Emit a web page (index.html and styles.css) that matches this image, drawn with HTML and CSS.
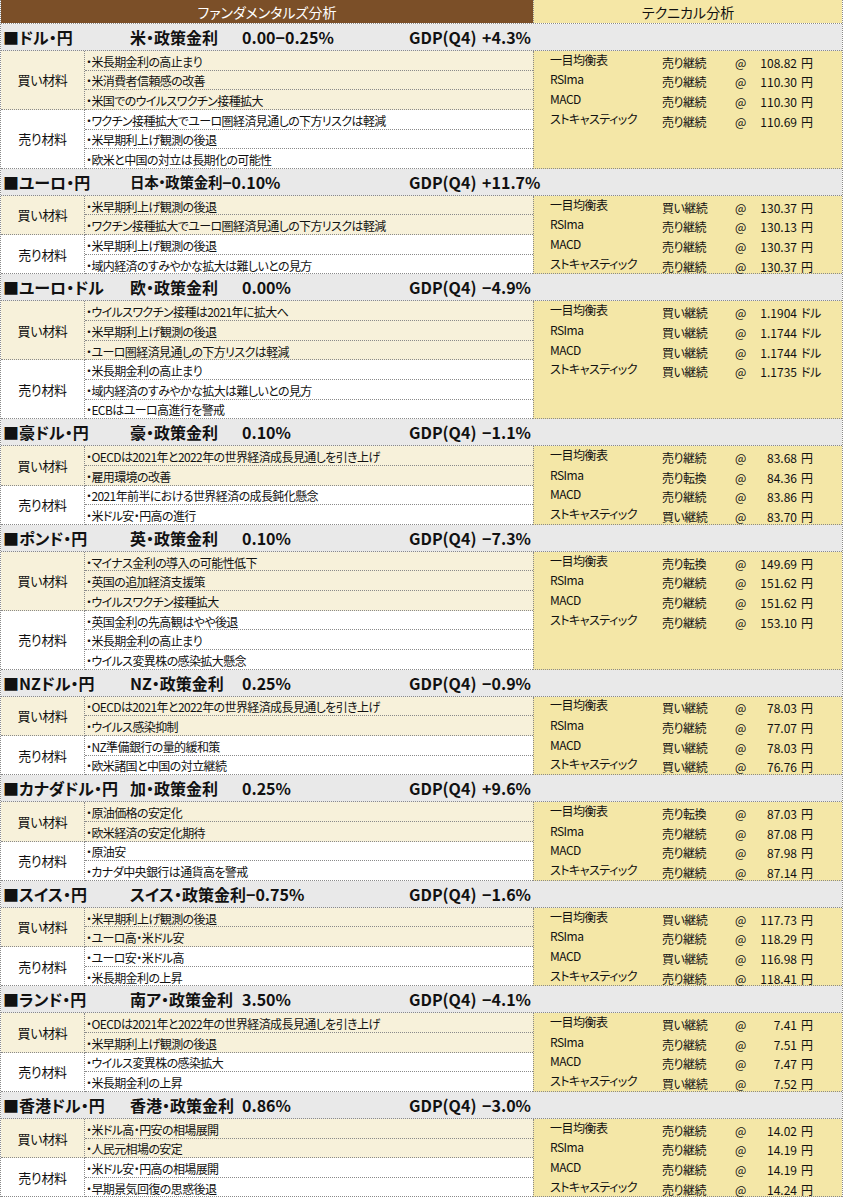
FILE: index.html
```html
<!DOCTYPE html>
<html lang="ja">
<head>
<meta charset="utf-8">
<title>ファンダメンタルズ分析・テクニカル分析</title>
<link rel="stylesheet" href="styles.css">
</head>
<body>
<div class="sheet">
  <div class="title-row">
    <div class="t-fund">ファンダメンタルズ分析</div>
    <div class="t-tech">テクニカル分析</div>
  </div>

  <section class="pair">
    <div class="ph"><span class="pn">■ドル・円</span><span class="pr"><span class="rl">米・政策金利</span><span class="rv">0.00−0.25%</span></span><span class="pg">GDP(Q4)&nbsp;+4.3%</span></div>
    <div class="pb">
      <div class="lab buy s3">買い材料</div>
      <div class="it buy">・米長期金利の高止まり</div>
      <div class="it buy">・米消費者信頼感の改善</div>
      <div class="it buy gl">・米国でのウイルスワクチン接種拡大</div>
      <div class="lab s3">売り材料</div>
      <div class="it">・ワクチン接種拡大でユーロ圏経済見通しの下方リスクは軽減</div>
      <div class="it">・米早期利上げ観測の後退</div>
      <div class="it">・欧米と中国の対立は長期化の可能性</div>
      <div class="tech s6">
        <span class="tn">一目均衡表</span><span class="ts">売り継続</span><span class="ta">@</span><span class="tv">108.82</span><span class="tu">円</span>
        <span class="tn">RSIma</span><span class="ts">売り継続</span><span class="ta">@</span><span class="tv">110.30</span><span class="tu">円</span>
        <span class="tn">MACD</span><span class="ts">売り継続</span><span class="ta">@</span><span class="tv">110.30</span><span class="tu">円</span>
        <span class="tn">ストキャスティック</span><span class="ts">売り継続</span><span class="ta">@</span><span class="tv">110.69</span><span class="tu">円</span>
      </div>
    </div>
  </section>

  <section class="pair">
    <div class="ph"><span class="pn">■ユーロ・円</span><span class="pr"><span class="rl tight">日本・政策金利</span><span class="rv">−0.10%</span></span><span class="pg">GDP(Q4)&nbsp;+11.7%</span></div>
    <div class="pb">
      <div class="lab buy s2">買い材料</div>
      <div class="it buy">・米早期利上げ観測の後退</div>
      <div class="it buy gl">・ワクチン接種拡大でユーロ圏経済見通しの下方リスクは軽減</div>
      <div class="lab s2">売り材料</div>
      <div class="it">・米早期利上げ観測の後退</div>
      <div class="it">・域内経済のすみやかな拡大は難しいとの見方</div>
      <div class="tech s4">
        <span class="tn">一目均衡表</span><span class="ts">買い継続</span><span class="ta">@</span><span class="tv">130.37</span><span class="tu">円</span>
        <span class="tn">RSIma</span><span class="ts">売り継続</span><span class="ta">@</span><span class="tv">130.13</span><span class="tu">円</span>
        <span class="tn">MACD</span><span class="ts">売り継続</span><span class="ta">@</span><span class="tv">130.37</span><span class="tu">円</span>
        <span class="tn">ストキャスティック</span><span class="ts">売り継続</span><span class="ta">@</span><span class="tv">130.37</span><span class="tu">円</span>
      </div>
    </div>
  </section>

  <section class="pair">
    <div class="ph"><span class="pn">■ユーロ・ドル</span><span class="pr"><span class="rl">欧・政策金利</span><span class="rv">0.00%</span></span><span class="pg">GDP(Q4)&nbsp;−4.9%</span></div>
    <div class="pb">
      <div class="lab buy s3">買い材料</div>
      <div class="it buy">・ウイルスワクチン接種は2021年に拡大へ</div>
      <div class="it buy">・米早期利上げ観測の後退</div>
      <div class="it buy gl">・ユーロ圏経済見通しの下方リスクは軽減</div>
      <div class="lab s3">売り材料</div>
      <div class="it">・米長期金利の高止まり</div>
      <div class="it">・域内経済のすみやかな拡大は難しいとの見方</div>
      <div class="it">・ECBはユーロ高進行を警戒</div>
      <div class="tech s6">
        <span class="tn">一目均衡表</span><span class="ts">買い継続</span><span class="ta">@</span><span class="tv">1.1904</span><span class="tu">ドル</span>
        <span class="tn">RSIma</span><span class="ts">買い継続</span><span class="ta">@</span><span class="tv">1.1744</span><span class="tu">ドル</span>
        <span class="tn">MACD</span><span class="ts">買い継続</span><span class="ta">@</span><span class="tv">1.1744</span><span class="tu">ドル</span>
        <span class="tn">ストキャスティック</span><span class="ts">買い継続</span><span class="ta">@</span><span class="tv">1.1735</span><span class="tu">ドル</span>
      </div>
    </div>
  </section>

  <section class="pair">
    <div class="ph"><span class="pn">■豪ドル・円</span><span class="pr"><span class="rl">豪・政策金利</span><span class="rv">0.10%</span></span><span class="pg">GDP(Q4)&nbsp;−1.1%</span></div>
    <div class="pb">
      <div class="lab buy s2">買い材料</div>
      <div class="it buy">・OECDは2021年と2022年の世界経済成長見通しを引き上げ</div>
      <div class="it buy gl">・雇用環境の改善</div>
      <div class="lab s2">売り材料</div>
      <div class="it">・2021年前半における世界経済の成長鈍化懸念</div>
      <div class="it">・米ドル安・円高の進行</div>
      <div class="tech s4">
        <span class="tn">一目均衡表</span><span class="ts">売り継続</span><span class="ta">@</span><span class="tv">83.68</span><span class="tu">円</span>
        <span class="tn">RSIma</span><span class="ts">売り転換</span><span class="ta">@</span><span class="tv">84.36</span><span class="tu">円</span>
        <span class="tn">MACD</span><span class="ts">売り継続</span><span class="ta">@</span><span class="tv">83.86</span><span class="tu">円</span>
        <span class="tn">ストキャスティック</span><span class="ts">買い継続</span><span class="ta">@</span><span class="tv">83.70</span><span class="tu">円</span>
      </div>
    </div>
  </section>

  <section class="pair">
    <div class="ph"><span class="pn">■ポンド・円</span><span class="pr"><span class="rl">英・政策金利</span><span class="rv">0.10%</span></span><span class="pg">GDP(Q4)&nbsp;−7.3%</span></div>
    <div class="pb">
      <div class="lab buy s3">買い材料</div>
      <div class="it buy">・マイナス金利の導入の可能性低下</div>
      <div class="it buy">・英国の追加経済支援策</div>
      <div class="it buy gl">・ウイルスワクチン接種拡大</div>
      <div class="lab s3">売り材料</div>
      <div class="it">・英国金利の先高観はやや後退</div>
      <div class="it">・米長期金利の高止まり</div>
      <div class="it">・ウイルス変異株の感染拡大懸念</div>
      <div class="tech s6">
        <span class="tn">一目均衡表</span><span class="ts">売り転換</span><span class="ta">@</span><span class="tv">149.69</span><span class="tu">円</span>
        <span class="tn">RSIma</span><span class="ts">売り継続</span><span class="ta">@</span><span class="tv">151.62</span><span class="tu">円</span>
        <span class="tn">MACD</span><span class="ts">売り継続</span><span class="ta">@</span><span class="tv">151.62</span><span class="tu">円</span>
        <span class="tn">ストキャスティック</span><span class="ts">売り継続</span><span class="ta">@</span><span class="tv">153.10</span><span class="tu">円</span>
      </div>
    </div>
  </section>

  <section class="pair">
    <div class="ph"><span class="pn">■NZドル・円</span><span class="pr"><span class="rl">NZ・政策金利</span><span class="rv">0.25%</span></span><span class="pg">GDP(Q4)&nbsp;−0.9%</span></div>
    <div class="pb">
      <div class="lab buy s2">買い材料</div>
      <div class="it buy">・OECDは2021年と2022年の世界経済成長見通しを引き上げ</div>
      <div class="it buy gl">・ウイルス感染抑制</div>
      <div class="lab s2">売り材料</div>
      <div class="it">・NZ準備銀行の量的緩和策</div>
      <div class="it">・欧米諸国と中国の対立継続</div>
      <div class="tech s4">
        <span class="tn">一目均衡表</span><span class="ts">買い継続</span><span class="ta">@</span><span class="tv">78.03</span><span class="tu">円</span>
        <span class="tn">RSIma</span><span class="ts">売り継続</span><span class="ta">@</span><span class="tv">77.07</span><span class="tu">円</span>
        <span class="tn">MACD</span><span class="ts">買い継続</span><span class="ta">@</span><span class="tv">78.03</span><span class="tu">円</span>
        <span class="tn">ストキャスティック</span><span class="ts">買い継続</span><span class="ta">@</span><span class="tv">76.76</span><span class="tu">円</span>
      </div>
    </div>
  </section>

  <section class="pair">
    <div class="ph"><span class="pn">■カナダドル・円</span><span class="pr"><span class="rl">加・政策金利</span><span class="rv">0.25%</span></span><span class="pg">GDP(Q4)&nbsp;+9.6%</span></div>
    <div class="pb">
      <div class="lab buy s2">買い材料</div>
      <div class="it buy">・原油価格の安定化</div>
      <div class="it buy gl">・欧米経済の安定化期待</div>
      <div class="lab s2">売り材料</div>
      <div class="it">・原油安</div>
      <div class="it">・カナダ中央銀行は通貨高を警戒</div>
      <div class="tech s4">
        <span class="tn">一目均衡表</span><span class="ts">売り転換</span><span class="ta">@</span><span class="tv">87.03</span><span class="tu">円</span>
        <span class="tn">RSIma</span><span class="ts">売り継続</span><span class="ta">@</span><span class="tv">87.08</span><span class="tu">円</span>
        <span class="tn">MACD</span><span class="ts">売り継続</span><span class="ta">@</span><span class="tv">87.98</span><span class="tu">円</span>
        <span class="tn">ストキャスティック</span><span class="ts">売り継続</span><span class="ta">@</span><span class="tv">87.14</span><span class="tu">円</span>
      </div>
    </div>
  </section>

  <section class="pair">
    <div class="ph"><span class="pn">■スイス・円</span><span class="pr"><span class="rl">スイス・政策金利</span><span class="rv">−0.75%</span></span><span class="pg">GDP(Q4)&nbsp;−1.6%</span></div>
    <div class="pb">
      <div class="lab buy s2">買い材料</div>
      <div class="it buy">・米早期利上げ観測の後退</div>
      <div class="it buy gl">・ユーロ高・米ドル安</div>
      <div class="lab s2">売り材料</div>
      <div class="it">・ユーロ安・米ドル高</div>
      <div class="it">・米長期金利の上昇</div>
      <div class="tech s4">
        <span class="tn">一目均衡表</span><span class="ts">買い継続</span><span class="ta">@</span><span class="tv">117.73</span><span class="tu">円</span>
        <span class="tn">RSIma</span><span class="ts">売り継続</span><span class="ta">@</span><span class="tv">118.29</span><span class="tu">円</span>
        <span class="tn">MACD</span><span class="ts">買い継続</span><span class="ta">@</span><span class="tv">116.98</span><span class="tu">円</span>
        <span class="tn">ストキャスティック</span><span class="ts">売り継続</span><span class="ta">@</span><span class="tv">118.41</span><span class="tu">円</span>
      </div>
    </div>
  </section>

  <section class="pair">
    <div class="ph"><span class="pn">■ランド・円</span><span class="pr"><span class="rl">南ア・政策金利</span><span class="rv">3.50%</span></span><span class="pg">GDP(Q4)&nbsp;−4.1%</span></div>
    <div class="pb">
      <div class="lab buy s2">買い材料</div>
      <div class="it buy">・OECDは2021年と2022年の世界経済成長見通しを引き上げ</div>
      <div class="it buy gl">・米早期利上げ観測の後退</div>
      <div class="lab s2">売り材料</div>
      <div class="it">・ウイルス変異株の感染拡大</div>
      <div class="it">・米長期金利の上昇</div>
      <div class="tech s4">
        <span class="tn">一目均衡表</span><span class="ts">買い継続</span><span class="ta">@</span><span class="tv">7.41</span><span class="tu">円</span>
        <span class="tn">RSIma</span><span class="ts">売り継続</span><span class="ta">@</span><span class="tv">7.51</span><span class="tu">円</span>
        <span class="tn">MACD</span><span class="ts">売り継続</span><span class="ta">@</span><span class="tv">7.47</span><span class="tu">円</span>
        <span class="tn">ストキャスティック</span><span class="ts">買い継続</span><span class="ta">@</span><span class="tv">7.52</span><span class="tu">円</span>
      </div>
    </div>
  </section>

  <section class="pair">
    <div class="ph"><span class="pn">■香港ドル・円</span><span class="pr"><span class="rl">香港・政策金利</span><span class="rv">0.86%</span></span><span class="pg">GDP(Q4)&nbsp;−3.0%</span></div>
    <div class="pb">
      <div class="lab buy s2">買い材料</div>
      <div class="it buy">・米ドル高・円安の相場展開</div>
      <div class="it buy gl">・人民元相場の安定</div>
      <div class="lab s2">売り材料</div>
      <div class="it">・米ドル安・円高の相場展開</div>
      <div class="it">・早期景気回復の思惑後退</div>
      <div class="tech s4">
        <span class="tn">一目均衡表</span><span class="ts">売り継続</span><span class="ta">@</span><span class="tv">14.02</span><span class="tu">円</span>
        <span class="tn">RSIma</span><span class="ts">売り継続</span><span class="ta">@</span><span class="tv">14.19</span><span class="tu">円</span>
        <span class="tn">MACD</span><span class="ts">売り継続</span><span class="ta">@</span><span class="tv">14.19</span><span class="tu">円</span>
        <span class="tn">ストキャスティック</span><span class="ts">売り継続</span><span class="ta">@</span><span class="tv">14.24</span><span class="tu">円</span>
      </div>
    </div>
  </section>
</div>
</body>
</html>
```

FILE: styles.css
```css
* { box-sizing: border-box; }

html, body {
  margin: 0;
  padding: 0;
  background: #ffffff;
}

body {
  font-family: "Noto Sans CJK JP", "Noto Sans", "Liberation Sans", sans-serif;
  font-feature-settings: "palt";
  color: #111;
  font-size: 12px;
}

.sheet {
  width: 843px;
  border-left: 1px dotted #8a8a8a;
  border-right: 1px dotted #8a8a8a;
}

/* title row */
.title-row {
  display: grid;
  grid-template-columns: 532px 1fr;
  height: 24px;
  border-bottom: 1px dotted #8a8a8a;
}
.t-fund {
  background: #7b4f28;
  color: #ffffff;
  font-size: 14px;
  display: flex;
  align-items: center;
  justify-content: center;
}
.t-tech {
  background: #f5e7a6;
  color: #111;
  font-size: 14px;
  display: flex;
  align-items: center;
  justify-content: center;
  border-left: 1px dotted #8a8a8a;
}

/* section header */
.ph {
  display: grid;
  grid-template-columns: 129px 279px 1fr;
  align-items: center;
  height: 27px;
  background: #e9e9e9;
  border-bottom: 1px dotted #8a8a8a;
  font-size: 16px;
  font-weight: 700;
  white-space: nowrap;
}
.pn { padding-left: 2px; }
.pr { display: flex; align-items: center; }
.rl { min-width: 112px; }
.rl.tight { min-width: 0; font-size: 14.5px; letter-spacing: -0.3px; }
.pg { word-spacing: 2px; }

/* body grid */
.pb {
  display: grid;
  grid-template-columns: 84px 448px 1fr;
  grid-auto-rows: 19.65px;
}
.lab {
  grid-column: 1;
  display: flex;
  align-items: center;
  justify-content: center;
  font-size: 13px;
  letter-spacing: -0.3px;
  border-right: 1px dotted #8a8a8a;
  border-bottom: 1px dotted #8a8a8a;
  background: #ffffff;
}
.lab.s2 { grid-row: span 2; }
.lab.s3 { grid-row: span 3; }

.it {
  grid-column: 2;
  display: flex;
  align-items: center;
  padding-left: 1px;
  padding-top: 2px;
  border-bottom: 1px dotted #8a8a8a;
  white-space: nowrap;
  letter-spacing: -0.6px;
  background: #ffffff;
}
.buy { background: #f7f1da; }

.tech {
  grid-column: 3;
  grid-row-start: 1;
  background: #f4e7a7;
  border-left: 1px dotted #8a8a8a;
  border-bottom: 1px dotted #8a8a8a;
  display: grid;
  grid-template-columns: 112px 73px 20px 42px 1fr;
  grid-auto-rows: 19.65px;
  padding-left: 16px;
  align-content: start;
  white-space: nowrap;
  letter-spacing: -0.5px;
}
.tech.s4 { grid-row-end: span 4; }
.tech.s6 { grid-row-end: span 6; }

.tn {
  align-self: center;
  padding-bottom: 3px;
}
.ts, .ta, .tv, .tu {
  align-self: center;
  padding-top: 3px;
}
.tv { text-align: right; letter-spacing: 0; }
.tu { padding-left: 4px; }
```
